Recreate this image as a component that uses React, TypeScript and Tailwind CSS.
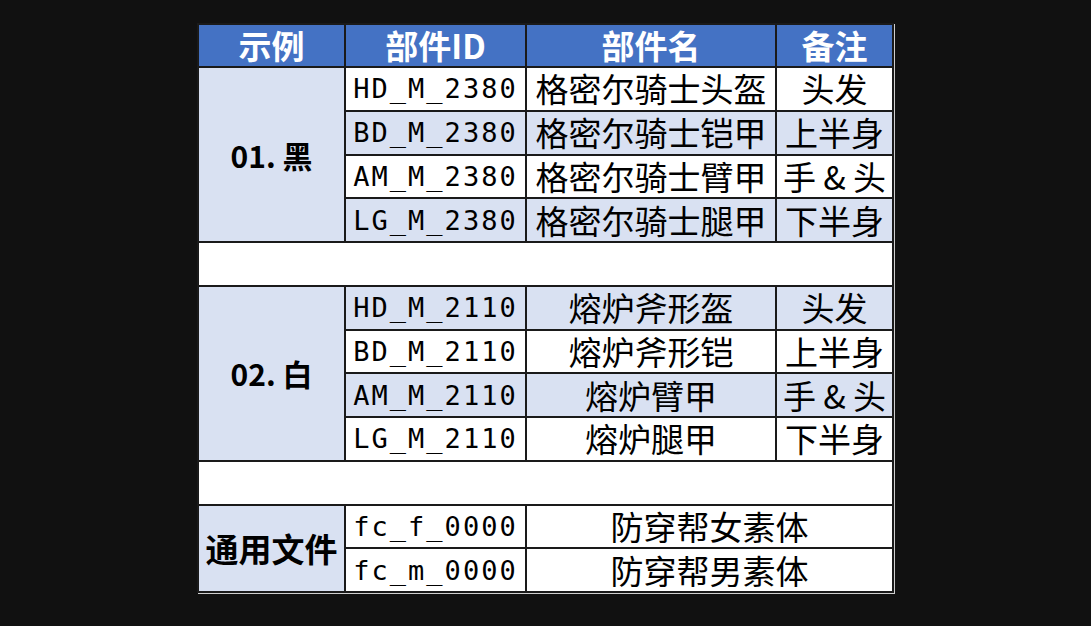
const CJK = "font-['Noto_Sans_CJK_SC','Noto_Sans',sans-serif]";
const MONO = "font-['DejaVu_Sans_Mono','Liberation_Mono',monospace]";

type Row = { id: string; name: string; note?: string; light: boolean };

const group1: Row[] = [
  { id: 'HD_M_2380', name: '格密尔骑士头盔', note: '头发', light: false },
  { id: 'BD_M_2380', name: '格密尔骑士铠甲', note: '上半身', light: true },
  { id: 'AM_M_2380', name: '格密尔骑士臂甲', note: '手 & 头', light: false },
  { id: 'LG_M_2380', name: '格密尔骑士腿甲', note: '下半身', light: true },
];

const group2: Row[] = [
  { id: 'HD_M_2110', name: '熔炉斧形盔', note: '头发', light: true },
  { id: 'BD_M_2110', name: '熔炉斧形铠', note: '上半身', light: false },
  { id: 'AM_M_2110', name: '熔炉臂甲', note: '手 & 头', light: true },
  { id: 'LG_M_2110', name: '熔炉腿甲', note: '下半身', light: false },
];

const group3: Row[] = [
  { id: 'fc_f_0000', name: '防穿帮女素体', light: false },
  { id: 'fc_m_0000', name: '防穿帮男素体', light: false },
];

function Cells({ row }: { row: Row }) {
  const bg = row.light ? 'bg-[#d9e1f2]' : 'bg-white';
  return (
    <>
      <div className={`${bg} ${MONO} flex items-center justify-center text-[27px] tracking-[2px] leading-none text-black`}>
        {row.id}
      </div>
      {row.note ? (
        <>
          <div className={`${bg} ${CJK} flex items-center justify-center text-[33px] leading-none text-black`}>
            {row.name}
          </div>
          <div className={`${bg} ${CJK} flex items-center justify-center text-[33px] leading-none text-black whitespace-pre`}>
            {row.note}
          </div>
        </>
      ) : (
        <div className={`${bg} ${CJK} col-span-2 flex items-center justify-center text-[33px] leading-none text-black`}>
          {row.name}
        </div>
      )}
    </>
  );
}

export default function App() {
  return (
    <div className="w-full min-h-screen bg-[#111111] flex justify-center pt-[23px]">
      <div className="grid grid-cols-[145px_179px_248px_115px] grid-rows-[41px_repeat(12,41.75px)] gap-[2px] p-[2px] bg-[#1a1a1a] shadow-[1px_1px_0_#cfcfcf] h-fit">
        {['示例', '部件ID', '部件名', '备注'].map((h) => (
          <div
            key={h}
            className={`bg-[#4472c4] ${CJK} flex items-center justify-center text-[33px] font-bold leading-none text-white`}
          >
            {h}
          </div>
        ))}

        <div className={`row-span-4 bg-[#d9e1f2] ${CJK} flex items-center justify-center text-[30px] font-bold leading-none text-black`}>
          01. 黑
        </div>
        {group1.map((r) => (
          <Cells key={r.id} row={r} />
        ))}

        <div className="col-span-4 bg-white" />

        <div className={`row-span-4 bg-[#d9e1f2] ${CJK} flex items-center justify-center text-[30px] font-bold leading-none text-black`}>
          02. 白
        </div>
        {group2.map((r) => (
          <Cells key={r.id} row={r} />
        ))}

        <div className="col-span-4 bg-white" />

        <div className={`row-span-2 bg-[#d9e1f2] ${CJK} flex items-center justify-center text-[33px] font-bold leading-none text-black`}>
          通用文件
        </div>
        {group3.map((r) => (
          <Cells key={r.id} row={r} />
        ))}
      </div>
    </div>
  );
}
